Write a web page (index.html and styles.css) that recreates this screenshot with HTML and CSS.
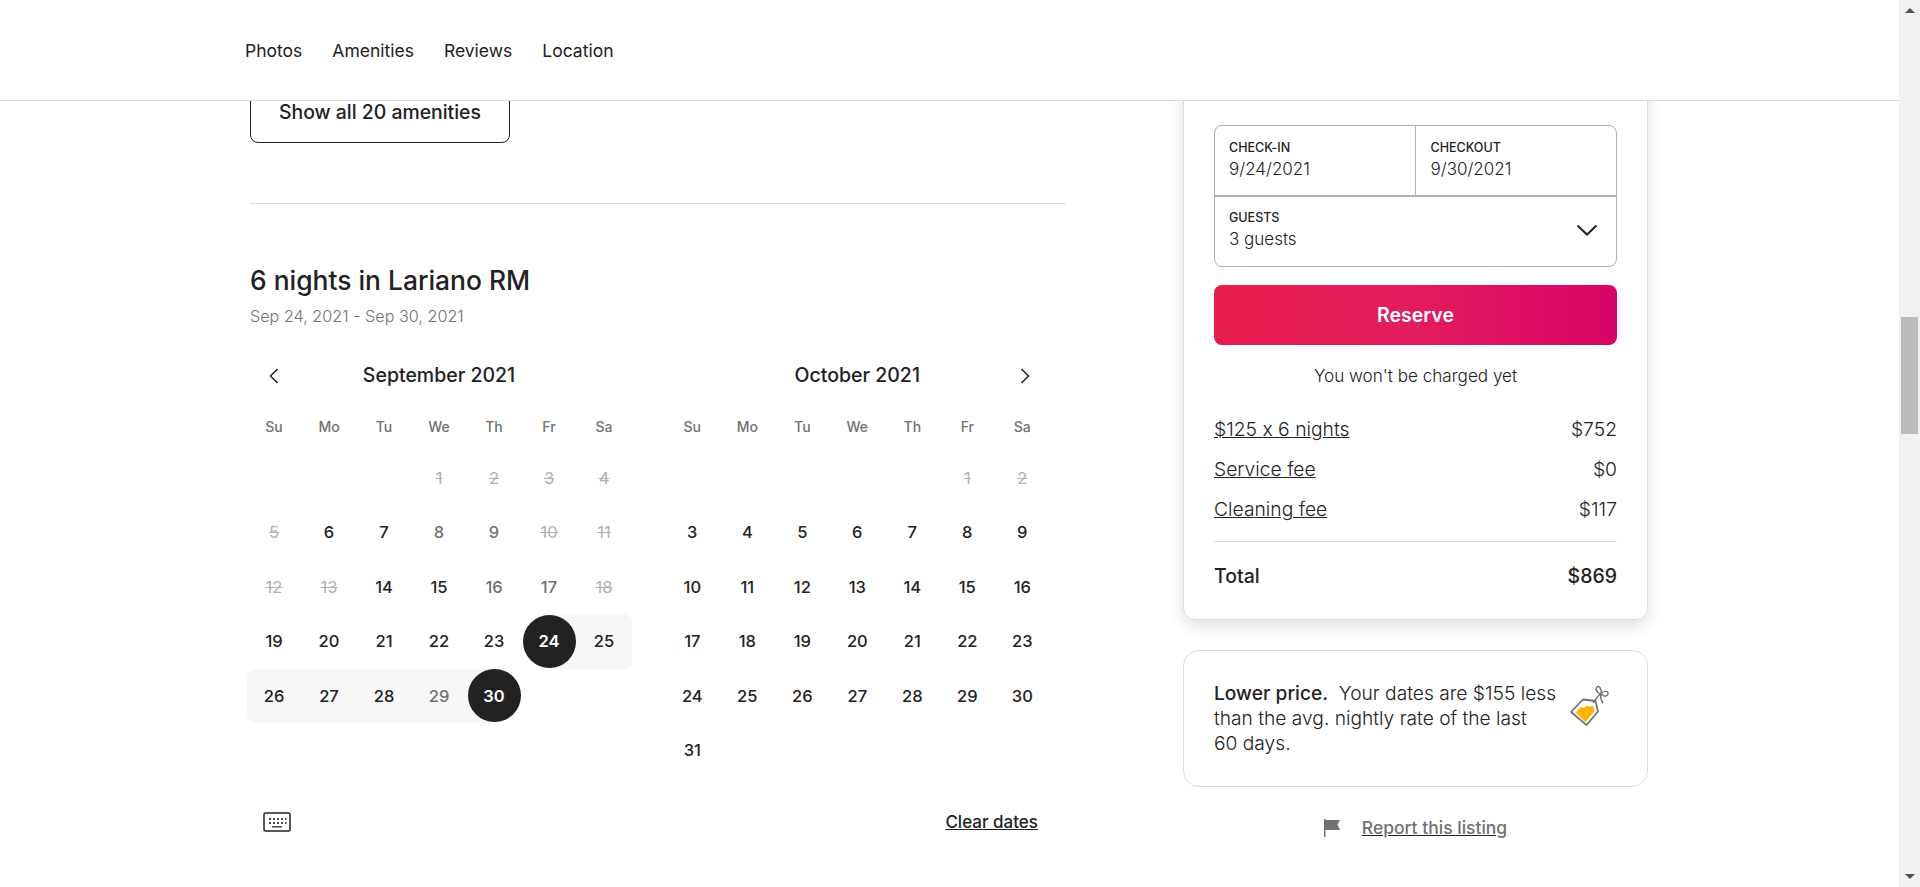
FILE: index.html
```html
<!DOCTYPE html>
<html lang="en">
<head>
  <meta charset="UTF-8">
  <title>6 nights in Lariano RM</title>
  <link rel="stylesheet" href="styles.css">
</head>
<body>
  <div class="page">
    <nav class="topnav">
      <a href="#">Photos</a>
      <a href="#">Amenities</a>
      <a href="#">Reviews</a>
      <a href="#">Location</a>
    </nav>

    <main class="content">
      <section class="left">
        <button class="show-all">Show all 20 amenities</button>
        <hr class="divider">
        <h2>6 nights in Lariano RM</h2>
        <p class="range">Sep 24, 2021 - Sep 30, 2021</p>

        <div class="calendars">
          <div class="month">
            <div class="month-head">
              <svg class="arrow arrow-left" viewBox="0 0 10 16"><path d="M8.5 1 1.5 8l7 7"/></svg>
              <span>September 2021</span>
            </div>
            <div class="days week">
              <span>Su</span><span>Mo</span><span>Tu</span><span>We</span><span>Th</span><span>Fr</span><span>Sa</span>
            </div>
            <div class="days">
              <span></span><span></span><span></span>
              <span class="off">1</span><span class="off">2</span><span class="off">3</span><span class="off">4</span>
              <span class="off">5</span><span>6</span><span>7</span><span class="dim">8</span><span class="dim">9</span><span class="off">10</span><span class="off">11</span>
              <span class="off">12</span><span class="off">13</span><span>14</span><span>15</span><span class="dim">16</span><span class="dim">17</span><span class="off">18</span>
              <span>19</span><span>20</span><span>21</span><span>22</span><span>23</span>
              <span class="start"><b>24</b></span><span class="stay stay-end">25</span>
              <span class="stay stay-start">26</span><span class="stay">27</span><span class="stay">28</span><span class="stay dim">29</span><span class="end"><b>30</b></span>
            </div>
          </div>

          <div class="month">
            <div class="month-head">
              <span>October 2021</span>
              <svg class="arrow arrow-right" viewBox="0 0 10 16"><path d="M1.5 1l7 7-7 7"/></svg>
            </div>
            <div class="days week">
              <span>Su</span><span>Mo</span><span>Tu</span><span>We</span><span>Th</span><span>Fr</span><span>Sa</span>
            </div>
            <div class="days">
              <span></span><span></span><span></span><span></span><span></span>
              <span class="off">1</span><span class="off">2</span>
              <span>3</span><span>4</span><span>5</span><span>6</span><span>7</span><span>8</span><span>9</span>
              <span>10</span><span>11</span><span>12</span><span>13</span><span>14</span><span>15</span><span>16</span>
              <span>17</span><span>18</span><span>19</span><span>20</span><span>21</span><span>22</span><span>23</span>
              <span>24</span><span>25</span><span>26</span><span>27</span><span>28</span><span>29</span><span>30</span>
              <span>31</span>
            </div>
          </div>
        </div>

        <div class="cal-foot">
          <svg class="keyboard" viewBox="0 0 28 20">
            <rect x="1" y="1" width="26" height="18" rx="1.5"/>
            <path class="keys" d="M6 6h2v2H6zM10 6h2v2h-2zM14 6h2v2h-2zM18 6h2v2h-2zM22 6h1.500v2H22zM6 10h2v2H6zM10 10h2v2h-2zM14 10h2v2h-2zM18 10h2v2h-2zM22 10h1.500v2H22zM9 14h10v1.500H9z"/>
          </svg>
          <a class="clear" href="#">Clear dates</a>
        </div>
      </section>

      <aside class="right">
        <div class="booking">
          <div class="picker">
            <div class="dates">
              <div class="field">
                <label>CHECK-IN</label>
                <div class="value">9/24/2021</div>
              </div>
              <div class="field field-out">
                <label>CHECKOUT</label>
                <div class="value">9/30/2021</div>
              </div>
            </div>
            <div class="field field-guests">
              <div>
                <label>GUESTS</label>
                <div class="value">3 guests</div>
              </div>
              <svg class="chevron" viewBox="0 0 22 12"><path d="M1.500 1.500 11 10.500l9.500-9"/></svg>
            </div>
          </div>
          <button class="reserve">Reserve</button>
          <p class="note">You won't be charged yet</p>
          <div class="fee"><a href="#">$125 x 6 nights</a><span>$752</span></div>
          <div class="fee"><a href="#">Service fee</a><span>$0</span></div>
          <div class="fee"><a href="#">Cleaning fee</a><span>$117</span></div>
          <hr class="divider total-line">
          <div class="total"><span>Total</span><span>$869</span></div>
        </div>

        <div class="lower">
          <p><strong>Lower price.</strong>&nbsp; Your dates are $155 less than the avg. nightly rate of the last<br>60 days.</p>
          <svg class="tag" viewBox="0 0 48 48">
            <path class="tag-body" d="M5 28 17 15.500l12.500 1.500 2.500 10.500L20.500 41z"/>
            <path class="tag-fill" d="M9.500 28.500 15 23c1 .5 2 1 3 .5s2-2 3-1.500 3 .5 6.500 0l1 5-9 11z"/>
            <path class="tag-string" d="M27 19c2-3 4-6 7-9-3-1-5-5-3-7s5 2 4 7c3-4 8-3 7 0s-4 3-7 0c-1 3 0 6 2 9"/>
          </svg>
        </div>

        <div class="report">
          <svg class="flag" viewBox="0 0 16 18"><path d="M0 0h1.500v1H16l-2.500 4.500L16 11H1.500v7H0z"/></svg>
          <a href="#">Report this listing</a>
        </div>
      </aside>
    </main>
  </div>

  <div class="scrollbar">
    <i class="tri tri-up"></i>
    <div class="track"><div class="thumb"></div></div>
    <i class="tri tri-down"></i>
  </div>
</body>
</html>
```

FILE: styles.css
```css
* {
  box-sizing: border-box;
}

html, body {
  height: 100%;
}

body {
  margin: 0;
  display: flex;
  overflow: hidden;
  font-family: Inter, "Noto Sans", sans-serif;
  font-feature-settings: "calt" 0;
  color: #222;
  background: #fff;
}

a {
  color: inherit;
}

.page {
  flex: 1;
  min-width: 0;
  display: flex;
  flex-direction: column;
}

.topnav {
  height: 101px;
  flex: none;
  display: flex;
  align-items: center;
  gap: 30px;
  padding: 1px 0 0 245px;
  border-bottom: 1px solid #ddd;
  font-size: 17.500px;
  font-weight: 400;
}

.topnav a {
  text-decoration: none;
}

.content {
  flex: 1;
  overflow: hidden;
  display: flex;
  gap: 117px;
  padding-left: 250px;
}

.left {
  width: 816px;
  flex: none;
}

.show-all {
  display: block;
  width: 260px;
  height: 57px;
  margin-top: -15px;
  padding: 0 0 5px;
  border: 1px solid #222;
  border-radius: 8px;
  background: #fff;
  color: #222;
  font: 500 19.400px Inter, sans-serif;
}

.divider {
  height: 1px;
  margin: 60px 0 0;
  border: 0;
  background: #ddd;
}

h2 {
  margin: 60px 0 0;
  font-size: 26.400px;
  line-height: 32px;
  font-weight: 500;
}

.range {
  margin: 10px 0 0;
  font-size: 16.200px;
  line-height: 20px;
  font-weight: 300;
  color: #717171;
}

.calendars {
  display: flex;
  gap: 33.300px;
  margin: 37px 0 0 -3.500px;
}

.month {
  width: 385px;
  flex: none;
}

.month-head {
  position: relative;
  height: 24px;
  text-align: center;
  font-size: 19.500px;
  line-height: 24px;
  font-weight: 500;
}

.arrow {
  position: absolute;
  top: 5px;
  width: 10px;
  height: 16px;
  fill: none;
  stroke: #222;
  stroke-width: 1.500;
}

.arrow-left {
  left: 22px;
}

.arrow-right {
  right: 20px;
}

.days {
  display: grid;
  grid-template-columns: repeat(7, 55px);
  grid-auto-rows: 54.500px;
  font-size: 16.500px;
  font-weight: 500;
}

.days span {
  display: flex;
  align-items: center;
  justify-content: center;
}

.week {
  grid-auto-rows: 20px;
  margin: 29px 0 14.500px;
  font-size: 14px;
  font-weight: 500;
  color: #717171;
}

.off {
  color: #b0b0b0;
  font-weight: 400;
  text-decoration: line-through;
}

.dim {
  color: #717171;
}

.stay {
  background: #f7f7f7;
}

.stay-start {
  border-radius: 8px 0 0 8px;
}

.stay-end {
  border-radius: 0 8px 8px 0;
}

.start {
  background: linear-gradient(to right, #fff 50%, #f7f7f7 50%);
}

.end {
  background: linear-gradient(to right, #f7f7f7 50%, #fff 50%);
}

.start b, .end b {
  width: 53px;
  height: 53px;
  border-radius: 50%;
  background: #222;
  color: #fff;
  font-weight: 600;
  display: flex;
  align-items: center;
  justify-content: center;
}

.cal-foot {
  display: flex;
  align-items: center;
  justify-content: space-between;
  margin-top: 34px;
  padding: 0 28px 0 13px;
}

.keyboard {
  width: 28px;
  height: 20px;
}

.keyboard rect {
  fill: none;
  stroke: #222;
  stroke-width: 1.500;
}

.keys {
  fill: #484848;
}

.clear {
  font-size: 17px;
  font-weight: 500;
}

.right {
  width: 465px;
  flex: none;
}

.booking {
  margin-top: -20px;
  padding: 43px 30px 0;
  height: 539px;
  border: 1px solid #ddd;
  border-radius: 12px;
  box-shadow: 0 6px 16px rgba(0, 0, 0, 0.12);
}

.picker {
  height: 142px;
  border: 1px solid #b0b0b0;
  border-radius: 8px;
  font-size: 17px;
  font-weight: 300;
}

.dates {
  display: flex;
  height: 71px;
  border-bottom: 2px solid #b0b0b0;
}

.field {
  flex: 1;
  padding: 14px 14px 0;
}

.field-out {
  border-left: 1px solid #b0b0b0;
  padding-left: 15px;
}

.field label {
  display: block;
  margin-bottom: 1px;
  font-size: 12.500px;
  line-height: 16px;
  font-weight: 500;
}

.value {
  line-height: 24px;
}

.field-guests {
  display: flex;
  align-items: center;
  justify-content: space-between;
  padding: 13px 18px 0 14px;
}

.chevron {
  width: 22px;
  height: 12px;
  margin-bottom: 2px;
  fill: none;
  stroke: #222;
  stroke-width: 2;
}

.reserve {
  display: block;
  width: 100%;
  height: 60px;
  margin-top: 18px;
  padding: 0;
  border: 0;
  border-radius: 8px;
  background: linear-gradient(to right, #e61e4d 0%, #e31c5f 50%, #d70466 100%);
  color: #fff;
  font: 600 19.500px Inter, sans-serif;
}

.note {
  margin: 19px 0 0;
  text-align: center;
  font-size: 17.100px;
  line-height: 24px;
  font-weight: 300;
}

.fee {
  display: flex;
  justify-content: space-between;
  height: 40px;
  font-size: 19.300px;
  line-height: 40px;
  font-weight: 300;
}

.note + .fee {
  margin-top: 21px;
}

.total-line {
  margin: 12px 0 0;
}

.total {
  display: flex;
  justify-content: space-between;
  margin-top: 22px;
  font-size: 19.500px;
  line-height: 24px;
  font-weight: 500;
}

.lower {
  display: flex;
  justify-content: space-between;
  height: 137px;
  margin-top: 30px;
  padding: 30px 30px 0;
  border: 1px solid #ddd;
  border-radius: 16px;
}

.lower p {
  width: 346px;
  margin: 0;
  font-size: 19.200px;
  line-height: 25px;
  font-weight: 300;
}

.lower strong {
  font-weight: 500;
}

.tag {
  width: 48px;
  height: 48px;
  margin: 3px 3px 0 0;
}

.tag-body {
  fill: #fff;
  stroke: #717171;
  stroke-width: 1.800;
  stroke-linejoin: round;
}

.tag-fill {
  fill: #ffb400;
}

.tag-string {
  fill: none;
  stroke: #717171;
  stroke-width: 1.400;
}

.report {
  display: flex;
  align-items: center;
  justify-content: center;
  gap: 22px;
  margin-top: 30px;
  font-size: 17.500px;
  font-weight: 500;
  color: #717171;
}

.report a {
  text-decoration-color: #222;
}

.flag {
  width: 16px;
  height: 18px;
  fill: #717171;
}

.scrollbar {
  width: 21px;
  flex: none;
  display: flex;
  flex-direction: column;
  align-items: center;
  background: #f1f1f1;
}

.track {
  flex: 1;
  width: 100%;
  padding: 296px 2px 0;
}

.thumb {
  height: 117px;
  background: #bcbcbc;
}

.tri {
  width: 0;
  height: 0;
  margin: 8px 0;
  border-left: 5px solid transparent;
  border-right: 5px solid transparent;
}

.tri-up {
  border-bottom: 5px solid #505050;
}

.tri-down {
  border-top: 5px solid #505050;
}
```
